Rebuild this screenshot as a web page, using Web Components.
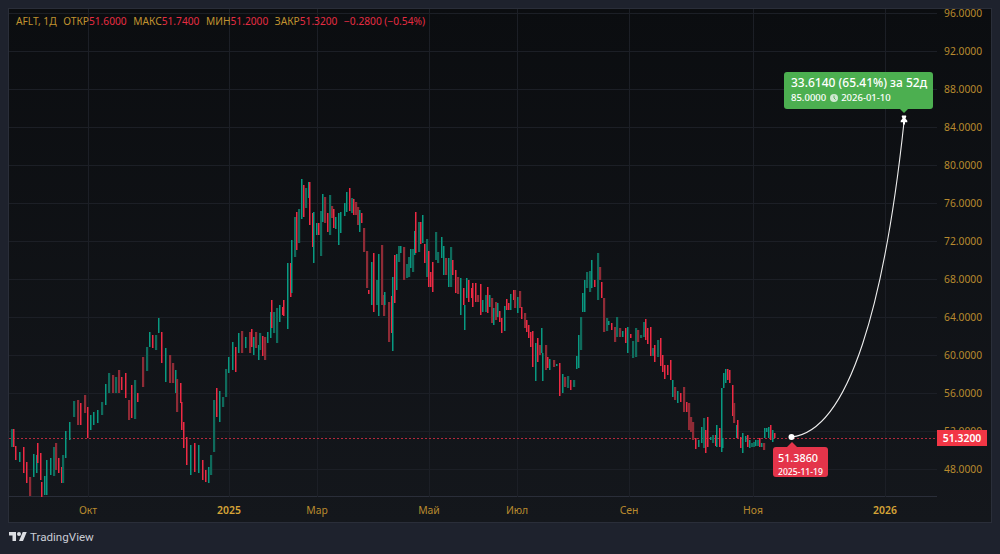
<!DOCTYPE html>
<html>
<head>
<meta charset="utf-8">
<title>AFLT</title>
<style>
  html, body { margin: 0; height: 100%; background: #1e222d; overflow: hidden; }
  body { font-family: "Noto Sans", "Open Sans", sans-serif; }
  tv-chart { margin: 8px 8px 0 8px; }
</style>
</head>
<body>

<tv-chart>
  <chart-pane slot="pane">
    <chart-legend symbol="AFLT, 1Д">
      <legend-item label="ОТКР" value="51.6000"></legend-item>
      <legend-item label="МАКС" value="51.7400"></legend-item>
      <legend-item label="МИН" value="51.2000"></legend-item>
      <legend-item label="ЗАКР" value="51.3200"></legend-item>
      <legend-item value="−0.2800 (−0.54%)"></legend-item>
    </chart-legend>
    <chart-callout color="#4caf50" style="left:775px; top:63px; width:149px; height:37px; --main-size:12px; --sub-size:9.5px; --pad:7px;" arrow="down" arrow-at="120">
      <span slot="main">33.6140 (65.41%) за 52д</span>
      <span slot="sub">85.0000 <clock-icon></clock-icon> 2026-01-10</span>
    </chart-callout>
    <chart-callout color="#e4344a" style="left:764px; top:438px; width:55px; height:30px; --main-size:10.8px; --sub-size:8.6px; --pad:5px;" arrow="up" arrow-at="19">
      <span slot="main">51.3860</span>
      <span slot="sub">2025-11-19</span>
    </chart-callout>
  </chart-pane>
  <price-scale slot="prices" last="51.3200"></price-scale>
  <time-scale slot="times"></time-scale>
</tv-chart>
<tv-footer></tv-footer>

<script>
// x, top, bottom read off the picture; 4th: 1 green, 0 red
const BARS = [
[11,429,447,1],[13,429,447,0],[15,446,460,0],[19,452,462,1],[23,447,473,0],[26,462,483,0],[29,477,496,0],[33,454,477,1],[36,455,473,1],[37,443,463,0],[40,453,480,0],[41,482,497,0],[44,476,495,1],[46,460,495,1],[50,458,475,1],[53,447,476,1],[55,443,470,0],[58,458,473,0],[61,467,483,0],[62,455,483,1],[65,431,458,1],[69,422,440,1],[73,401,417,1],[77,400,425,0],[80,403,425,0],[84,395,413,0],[87,407,438,0],[90,415,430,1],[93,412,425,1],[97,410,423,1],[101,402,415,1],[105,384,405,1],[108,373,393,1],[112,375,393,0],[115,377,393,1],[118,370,393,0],[121,377,390,0],[125,373,398,0],[128,400,420,0],[131,385,418,0],[134,380,419,1],[137,393,402,0],[142,357,387,0],[146,347,371,1],[149,332,347,1],[152,335,348,0],[155,335,350,1],[158,318,333,1],[161,332,363,0],[165,348,382,1],[169,355,383,0],[172,363,383,0],[175,370,393,1],[176,379,412,0],[180,383,403,0],[181,402,430,0],[183,422,448,0],[186,437,465,0],[190,445,475,1],[194,443,472,0],[198,445,473,1],[202,460,480,0],[205,470,482,0],[208,467,483,1],[210,455,475,1],[213,400,452,1],[216,388,417,0],[219,391,422,1],[222,397,407,1],[225,369,397,1],[228,357,373,1],[232,342,370,1],[235,347,372,0],[238,333,353,1],[241,331,353,0],[245,337,348,1],[249,332,353,0],
[251,329,347,0],[253,337,355,1],[255,332,348,0],[258,345,360,1],[259,333,350,1],[262,336,356,0],[264,337,360,0],[267,332,343,1],[270,312,338,1],[271,300,328,0],[273,312,333,1],[276,308,343,1],[279,305,322,1],[282,307,315,0],[283,300,316,0],[287,263,329,1],[290,263,297,0],[291,240,293,1],[294,217,257,1],[296,212,250,0],[298,209,243,1],[301,179,219,1],[303,185,217,0],[305,188,208,1],[308,182,198,1],[309,182,225,0],[312,213,247,0],[313,212,263,1],[316,223,235,1],[318,223,235,0],[320,211,256,1],[322,194,222,1],[324,197,223,0],[327,213,232,0],[329,195,235,1],[331,206,218,0],[333,209,228,0],[335,217,229,1],[338,213,245,1],[340,212,233,1],[344,203,216,1],[346,192,212,1],[349,188,211,0],[351,198,213,1],[353,199,215,0],[355,202,215,0],[357,207,225,0],[359,210,232,1],[361,213,223,0],[363,228,252,0],[366,251,288,0],[368,290,294,0],[371,262,305,1],[373,253,312,0],[376,280,305,1],[378,254,316,1],[381,245,305,0],[383,295,316,0],[384,292,305,1],[388,302,342,0],[391,296,333,0],[392,277,351,1],[394,255,303,0],[396,254,290,1],[398,246,262,1],[400,246,253,1],[403,247,280,0],[406,264,278,1],[408,257,277,1],[410,249,268,1],[412,249,272,1],[414,231,255,1],[415,212,253,0],[418,222,252,1],[420,222,244,0],[422,215,243,1],[424,244,263,0],[426,239,277,1],[428,251,287,0],[430,272,287,0],[432,262,292,0],[435,232,260,1],[437,252,263,1],[441,237,258,1],[443,246,275,1],[445,258,275,0],[448,258,287,1],[450,247,287,1],[452,260,275,0],[455,270,293,0],[457,277,294,0],[460,278,315,1],[463,288,305,0],[464,305,330,1],[466,278,298,1],[468,280,302,0],[471,288,298,0],[472,283,307,0],[475,283,302,0],[477,295,302,0],
[480,284,315,0],[482,300,312,1],[485,295,312,1],[487,287,313,0],[489,295,307,1],[491,298,323,0],[493,308,325,1],[495,302,320,0],[497,303,317,1],[499,311,322,0],[501,318,333,0],[504,306,331,1],[506,299,310,0],[508,303,310,0],[510,294,310,1],[513,290,300,0],[514,290,308,0],[517,297,313,1],[519,291,308,0],[521,307,319,0],[524,313,328,0],[526,320,332,0],[528,325,338,0],[530,332,347,0],[532,331,367,0],[535,343,381,1],[537,338,362,0],[539,345,355,0],[541,328,353,1],[542,353,381,1],[545,345,370,0],[547,357,368,0],[549,359,370,1],[553,360,367,0],[556,364,366,1],[559,363,396,0],[562,374,393,1],[564,377,387,0],[567,376,388,1],[570,380,390,0],[573,380,387,1],[576,356,369,1],[578,335,368,1],[580,317,350,1],[582,293,312,1],[584,280,312,1],[586,272,288,1],[589,271,292,1],[591,260,288,1],[594,280,287,0],[597,253,300,1],[599,267,280,0],[601,282,298,0],[603,298,332,0],[606,318,331,1],[608,321,325,1],[611,323,330,0],[614,327,342,0],[616,317,337,1],[619,328,337,0],[622,331,337,1],[625,328,343,0],[627,327,353,1],[630,334,338,0],[632,341,358,1],[635,328,357,1],[637,330,342,0],[640,335,338,1],[643,322,337,1],[645,319,340,0],[647,328,344,0],[650,327,356,0],[652,348,356,1],[654,345,362,0],[657,340,357,1],[660,338,366,0],[662,355,372,0],[664,365,379,0],[667,365,375,0],
[670,360,380,0],[672,380,397,1],[674,387,400,0],[677,391,403,1],[680,393,402,0],[683,387,412,0],[686,402,412,0],[688,403,430,0],[690,417,432,0],[692,422,440,0],[695,438,449,0],[698,440,447,1],[701,427,443,1],[703,418,448,1],[705,430,453,0],[707,417,447,0],[710,437,440,1],[712,435,443,1],[715,435,446,0],[716,425,447,1],[719,428,447,0],[721,388,452,1],[722,438,448,1],[723,373,388,1],[725,369,383,1],[727,369,380,0],[729,370,383,0],[732,385,416,0],[733,403,423,0],[736,425,438,1],[737,420,438,0],[740,437,448,0],[742,433,453,1],[745,436,442,1],[747,435,447,0],[749,440,448,1],[751,443,447,1],[753,442,447,1],[755,440,446,1],[757,440,446,1],[759,438,447,0],[761,443,447,1],[763,443,450,0],[764,428,438,1],[766,428,432,1],[768,427,438,1],[770,425,440,0],[772,430,442,1],[774,433,438,0]
];

const PRICES = ["96.0000","92.0000","88.0000","84.0000","80.0000","76.0000","72.0000","68.0000","64.0000","60.0000","56.0000","52.0000","48.0000"];
const GRID_X = [88, 229, 317, 429, 517, 629, 753, 885];
const TICKS = [["Окт"],["2025",1],["Мар"],["Май"],["Июл"],["Сен"],["Ноя"],["2026",1]];

class TvChart extends HTMLElement {
  constructor() {
    super();
    this.attachShadow({ mode: "open" });
    this.shadowRoot.innerHTML = `
      <style>
        :host {
          display: grid;
          grid-template-columns: 928px 54px;
          grid-template-rows: 488px 25px;
          width: 982px;
          height: 513px;
          border: 1px solid #2a2e39;
          background: linear-gradient(#0b0d10, #14171c);
        }
        ::slotted([slot="times"]) { grid-column: 1 / 3; }
      </style>
      <slot name="pane"></slot>
      <slot name="prices"></slot>
      <slot name="times"></slot>`;
  }
}

class ChartPane extends HTMLElement {
  constructor() {
    super();
    this.attachShadow({ mode: "open" });
    let lines = "";
    PRICES.forEach((p, i) => {
      const y = 13 + i * 38 + 0.5;
      lines += `<line x1="9" x2="937" y1="${y}" y2="${y}"/>`;
    });
    GRID_X.forEach(x => {
      lines += `<line x1="${x + 0.5}" x2="${x + 0.5}" y1="9" y2="497"/>`;
    });
    let bars = "";
    BARS.forEach((b, i) => {
      const green = b[3] === 1;
      const wide = (i * 7 + b[1]) % 3 === 0;
      const fill = wide ? (green ? "#0f6b5c" : "#8f2b36") : (green ? "#089981" : "#ee2a44");
      bars += `<rect x="${b[0]}" y="${b[1]}" width="${wide ? 2.2 : 1.5}" height="${b[2] - b[1]}" fill="${fill}"/>`;
    });
    this.shadowRoot.innerHTML = `
      <style>
        :host { display: block; position: relative; border-bottom: 1px solid #2a2e39; box-sizing: border-box; }
        svg { position: absolute; left: 0; top: 0; }
        .grid line { stroke: #1c1f26; stroke-width: 1; }
      </style>
      <svg width="928" height="488" viewBox="9 9 928 488">
        <g class="grid">${lines}</g>
        <line x1="9" x2="937" y1="438.5" y2="438.5" stroke="#b32a3c" stroke-width="1" stroke-dasharray="2 2"/>
        <g>${bars}</g>
        <path d="M791.5 437 C 850 431, 885 300, 904 122" fill="none" stroke="#eeeeee" stroke-width="1.1"/>
        <circle cx="791.5" cy="437" r="3" fill="#fff"/>
        <path d="M902 115.5 h4 l.3 1 l-.8 2 l1.8 2.2 v1.5 h-2.3 v2.3 h-2 v-2.3 h-2.3 v-1.5 l1.8 -2.2 l-.8 -2 z" fill="#fff"/>
      </svg>
      <slot></slot>`;
  }
}

class ChartLegend extends HTMLElement {
  constructor() {
    super();
    this.attachShadow({ mode: "open" });
    this.shadowRoot.innerHTML = `
      <style>
        :host {
          position: absolute; left: 7px; top: 5px;
          display: flex; gap: 6.6px;
          font: 10.2px/14px "Noto Sans", "Open Sans", sans-serif;
          color: #c0922f;
          white-space: nowrap;
        }
        span { margin-right: 0; }
      </style>
      <span>${this.getAttribute("symbol")}</span><slot></slot>`;
  }
}

class LegendItem extends HTMLElement {
  constructor() {
    super();
    this.attachShadow({ mode: "open" });
    this.shadowRoot.innerHTML = `
      <style>
        :host { display: inline-block; }
        b { font-weight: 400; color: #e62c42; }
      </style>
      ${this.getAttribute("label") || ""}<b>${this.getAttribute("value")}</b>`;
  }
}

class ChartCallout extends HTMLElement {
  constructor() {
    super();
    this.attachShadow({ mode: "open" });
    const up = this.getAttribute("arrow") === "up";
    const at = this.getAttribute("arrow-at");
    this.shadowRoot.innerHTML = `
      <style>
        :host {
          position: absolute; box-sizing: border-box;
          padding: 2px 0 0 var(--pad); border-radius: 3px;
          background: ${this.getAttribute("color")};
          color: #fff; white-space: nowrap;
          display: flex; flex-direction: column;
          font-family: "Noto Sans", "Open Sans", sans-serif;
        }
        .main { font-size: var(--main-size); line-height: 18px; font-weight: 500; }
        .sub { font-size: var(--sub-size); line-height: 11px; font-weight: 500; }
        .arrow {
          position: absolute; left: ${at - 5}px; width: 0; height: 0;
          border: 5px solid transparent;
          ${up ? "top: -10px; border-bottom-color:" : "bottom: -4px; border-bottom-width: 0; border-top-color:"} ${this.getAttribute("color")};
        }
      </style>
      <div class="main"><slot name="main"></slot></div>
      <div class="sub"><slot name="sub"></slot></div>
      <div class="arrow"></div>`;
  }
}

class ClockIcon extends HTMLElement {
  constructor() {
    super();
    this.attachShadow({ mode: "open" });
    this.shadowRoot.innerHTML = `
      <style>:host { display: inline-block; width: 8px; height: 8px; vertical-align: -1px; margin: 0 1px; } svg { display: block; }</style>
      <svg width="8" height="8" viewBox="0 0 8 8"><circle cx="4" cy="4" r="4" fill="#cfe8d0"/><path d="M4 1.6V4l1.6 1.6" fill="none" stroke="#4caf50" stroke-width=".9"/></svg>`;
  }
}

class PriceScale extends HTMLElement {
  constructor() {
    super();
    this.attachShadow({ mode: "open" });
    const rows = PRICES.map(p => `<div>${p}</div>`).join("");
    this.shadowRoot.innerHTML = `
      <style>
        :host {
          display: grid; position: relative;
          grid-auto-rows: 38px;
          font: 10.3px/9px "Noto Sans", "Open Sans", sans-serif;
          color: #b88a2e;
          padding-left: 7px;
        }
        .tag {
          position: absolute; left: 0; top: 421px;
          width: 50px; height: 16px;
          background: #f23645; color: #fff;
          font-weight: 600; line-height: 16px;
          font-size: 10.4px; text-align: center;
        }
      </style>
      ${rows}
      <div class="tag">${this.getAttribute("last")}</div>`;
  }
}

class TimeScale extends HTMLElement {
  constructor() {
    super();
    this.attachShadow({ mode: "open" });
    const cells = TICKS.map(t => `<div class="${t[1] ? "year" : ""}"><span>${t[0]}</span></div>`).join("");
    this.shadowRoot.innerHTML = `
      <style>
        :host {
          display: grid;
          grid-template-columns: 141px 88px 112px 88px 112px 124px 132px 0;
          padding-left: 79px;
          align-items: center;
          font: 10.4px/24px "Noto Sans", "Open Sans", sans-serif;
          color: #b88a2e;
        }
        div { width: 0; display: flex; justify-content: center; }
        .year { color: #d6a437; font-weight: 600; }
      </style>
      ${cells}`;
  }
}

class TvFooter extends HTMLElement {
  constructor() {
    super();
    this.attachShadow({ mode: "open" });
    this.shadowRoot.innerHTML = `
      <style>
        :host {
          display: flex; align-items: center; gap: 3px;
          padding: 4px 0 0 9px;
          font: 400 11.6px/20px Roboto, "Noto Sans", sans-serif;
          color: #c9ccd4;
        }
        svg { display: block; }
      </style>
      <svg width="18" height="14" viewBox="0 0 36 28" fill="#dcdee3">
        <path d="M14 22H7V11H0V4h14v18zM28 22h-8l7.5-18h8L28 22z"/><circle cx="20" cy="8" r="4"/>
      </svg>
      <span>TradingView</span>`;
  }
}

customElements.define("tv-chart", TvChart);
customElements.define("chart-pane", ChartPane);
customElements.define("chart-legend", ChartLegend);
customElements.define("legend-item", LegendItem);
customElements.define("chart-callout", ChartCallout);
customElements.define("clock-icon", ClockIcon);
customElements.define("price-scale", PriceScale);
customElements.define("time-scale", TimeScale);
customElements.define("tv-footer", TvFooter);
</script>
</body>
</html>
